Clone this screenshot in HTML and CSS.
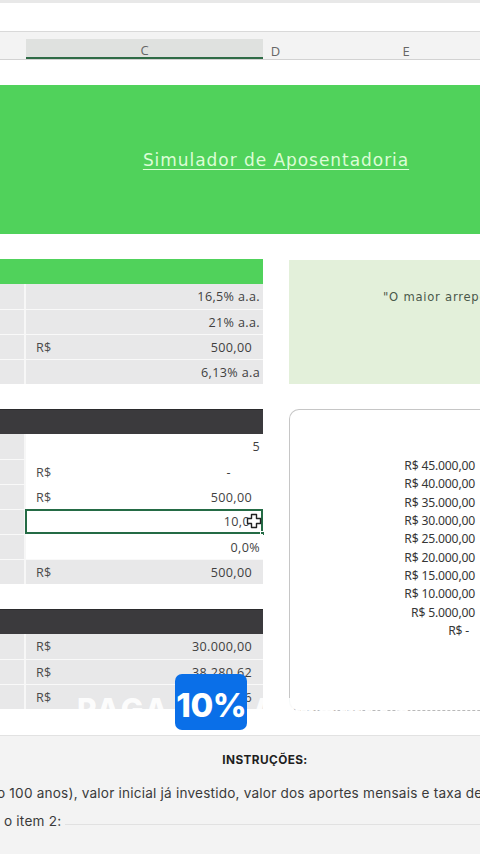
FILE: index.html
```html
<!DOCTYPE html>
<html lang="pt-BR">
<head>
<meta charset="utf-8">
<title>Simulador de Aposentadoria</title>
<link rel="stylesheet" href="styles.css">
</head>
<body>
<div class="page">
  <div class="top"></div>
  <div class="colheads">
    <div class="ch ch-b"></div>
    <div class="ch ch-c selected">C</div>
    <div class="ch ch-d">D</div>
    <div class="ch ch-e">E</div>
  </div>
  <div class="gap-row"></div>
  <div class="banner"><span class="title">Simulador de Aposentadoria</span></div>
  <div class="gap-row"></div>

  <div class="sheet">
    <div class="tbl">
      <div class="hdr hdr-green"></div>
      <div class="row"><div class="cb"></div><div class="cc"><span></span><span class="val pct">16,5% a.a.</span></div></div>
      <div class="row"><div class="cb"></div><div class="cc"><span></span><span class="val pct">21% a.a.</span></div></div>
      <div class="row"><div class="cb"></div><div class="cc"><span class="cur">R$</span><span class="val">500,00</span></div></div>
      <div class="row"><div class="cb"></div><div class="cc"><span></span><span class="val pct">6,13% a.a</span></div></div>
    </div>

    <div class="quote"><span>"O maior arrependimento</span></div>

    <div class="leftcol">
      <div class="tbl">
        <div class="hdr hdr-dark"></div>
        <div class="row"><div class="cb"></div><div class="cc white"><span></span><span class="val pct">5</span></div></div>
        <div class="row"><div class="cb"></div><div class="cc white"><span class="cur">R$</span><span class="val dash">-</span></div></div>
        <div class="row"><div class="cb"></div><div class="cc white"><span class="cur">R$</span><span class="val">500,00</span></div></div>
        <div class="row"><div class="cb"></div><div class="cc white sel"><span></span><span class="val">10,0</span>
          <svg class="cursor" width="16" height="16" viewBox="0 0 16 16"><path d="M5.5 1.5h5v4h4v5h-4v4h-5v-4h-4v-5h4z" fill="#fff" stroke="#222" stroke-width="1.4" stroke-linejoin="round"/></svg>
          <span class="handle"></span></div></div>
        <div class="row"><div class="cb"></div><div class="cc white"><span></span><span class="val pct">0,0%</span></div></div>
        <div class="row"><div class="cb"></div><div class="cc"><span class="cur">R$</span><span class="val">500,00</span></div></div>
      </div>
      <div class="tbl">
        <div class="hdr hdr-dark"></div>
        <div class="row"><div class="cb"></div><div class="cc"><span class="cur">R$</span><span class="val">30.000,00</span></div></div>
        <div class="row"><div class="cb"></div><div class="cc"><span class="cur">R$</span><span class="val">38.280,62</span></div></div>
        <div class="row"><div class="cb"></div><div class="cc"><span class="cur">R$</span><span class="val">41.563,36</span></div></div>
      </div>
    </div>

    <div class="chart">
      <div class="axis">
        <span>R$ 45.000,00</span>
        <span>R$ 40.000,00</span>
        <span>R$ 35.000,00</span>
        <span>R$ 30.000,00</span>
        <span>R$ 25.000,00</span>
        <span>R$ 20.000,00</span>
        <span>R$ 15.000,00</span>
        <span>R$ 10.000,00</span>
        <span>R$ 5.000,00</span>
        <span class="zero">R$ -</span>
      </div>
    </div>
  </div>

  <div class="instructions">
    <div class="ins-title">INSTRUÇÕES:</div>
    <div class="ins-line first">o 100 anos), valor inicial já investido, valor dos aportes mensais e taxa de</div>
    <div class="ins-line second"><span>o item 2:</span><span class="rule"></span></div>
  </div>

  <div class="promo">
    <span class="promo-word">PAGA</span>
    <span class="badge">10%</span>
    <span class="promo-word">A MENOS</span>
  </div>
</div>
</body>
</html>
```

FILE: styles.css
```css
* { box-sizing: border-box; }
html, body { margin: 0; padding: 0; }
body {
  background: #ffffff;
  width: 480px;
  height: 854px;
  overflow: hidden;
  font-family: "Open Sans", "Noto Sans", sans-serif;
  color: #3d3d3d;
}
.page { position: relative; width: 480px; height: 854px; overflow: hidden; }

.top {
  height: 31px;
  border-top: 3px solid #e8e8e8;
  background: #fff;
}

.colheads {
  display: flex;
  height: 29px;
  background: #f3f3f3;
  border-top: 1px solid #d9d9d9;
  border-bottom: 1px solid #d2d2d2;
  padding-top: 7px;
  white-space: nowrap;
}
.ch {
  height: 20px;
  display: flex;
  align-items: center;
  justify-content: center;
  font-size: 13px;
  color: #666;
  font-family: "Open Sans", sans-serif;
  flex: none;
  padding-top: 3px;
}
.ch-b { width: 26px; }
.ch-c { width: 237px; }
.ch-d { width: 25px; }
.ch-e { width: 236px; }
.selected {
  background: #dfe1df;
  border-bottom: 2px solid #2f6b46;
}

.gap-row { height: 25px; }

.banner {
  height: 149px;
  background: #50d25b;
  display: flex;
  align-items: center;
  justify-content: center;
  padding-left: 72px;
}
.title {
  font-family: "DejaVu Sans", Verdana, sans-serif;
  font-size: 17px;
  letter-spacing: 0.95px;
  color: #dcfdd6;
  text-decoration: underline;
  text-underline-offset: 3px;
  text-decoration-thickness: 1px;
  margin-top: 0;
}

.sheet {
  display: grid;
  grid-template-columns: 263px 1fr;
  column-gap: 26px;
  row-gap: 25px;
}

.tbl { display: flex; flex-direction: column; }
.hdr { height: 25px; }
.hdr-green { background: #50d25b; }
.hdr-dark { background: #3b3a3d; border-top: 1px solid #2b2b2d; }

.row {
  display: grid;
  grid-template-columns: 26px 1fr;
  height: 25px;
  font-size: 12.6px;
}
.row + .row .cb, .row + .row .cc { border-top: 1px solid #f9f9f9; }
.cb { background: #e8e8e9; border-right: 2px solid #f7f7f7; }
.cc {
  background: #e8e8e9;
  display: flex;
  align-items: center;
  justify-content: space-between;
  padding: 0 11px 0 10px;
  position: relative;
}
.cc.white { background: #ffffff; }
.row + .row .cc.white { border-top: 1px solid #ffffff; }
.cur { color: #4a4a4a; letter-spacing: 0.3px; }
.val { color: #3f3f3f; letter-spacing: 0.35px; }
.val.pct { margin-right: -8px; }
.val.dash { margin-right: 21px; }

.cc.sel {
  border: 2px solid #246b45 !important;
  margin-left: -1px;
}
.cursor { position: absolute; right: -1px; top: 2px; }
.handle {
  position: absolute;
  right: -4px;
  bottom: -4px;
  width: 5px;
  height: 5px;
  background: #246b45;
  border: 1px solid #fff;
}

.quote {
  margin-top: 1px;
  margin-right: -40px;
  background: #e3f0da;
  padding: 30px 0 0 94px;
  white-space: nowrap;
  overflow: hidden;
  font-family: "DejaVu Sans", Verdana, sans-serif;
  font-size: 11.6px;
  letter-spacing: 0.75px;
  color: #4a584a;
}

.leftcol { display: flex; flex-direction: column; gap: 25px; }

.chart {
  height: 302px;
  margin-right: -40px;
  border: 1px solid #c6c6c6;
  border-bottom: 1.5px dashed #b9b9b9;
  border-radius: 10px;
  background: #fff;
  padding: 47px 44px 0 0;
}
.axis {
  display: flex;
  flex-direction: column;
  align-items: flex-end;
  font-family: "Noto Sans", sans-serif;
  font-size: 12.2px;
  line-height: 18.35px;
  color: #363636;
  letter-spacing: -0.2px;
}
.axis .zero { margin-right: 6px; }

.instructions {
  margin-top: 24px;
  height: 140px;
  background: #f3f3f3;
  border-top: 1px solid #e2e2e2;
  font-family: "Inter", "Noto Sans", sans-serif;
  color: #3a3a3a;
}
.ins-title {
  text-align: center;
  padding: 17px 0 0 50px;
  font-weight: 700;
  font-size: 11.8px;
  letter-spacing: 0.4px;
  color: #1e1e1e;
  height: 43px;
}
.ins-line {
  white-space: nowrap;
  font-size: 13.6px;
  height: 28px;
  line-height: 28px;
  letter-spacing: 0.2px;
}
.ins-line.first { margin-left: -3px; }
.ins-line.second { display: flex; align-items: center; padding-left: 4px; gap: 4px; }
.ins-line .rule { flex: 1; height: 1px; background: #e1e1e1; margin-top: 6px; }

.promo {
  position: absolute;
  left: 77px;
  top: 674px;
  display: flex;
  align-items: center;
  gap: 5px;
  white-space: nowrap;
}
.promo-word {
  font-family: "Inter", "Open Sans", sans-serif;
  font-weight: 800;
  font-size: 30px;
  color: rgba(255,255,255,0.92);
  margin-top: 14px;
  letter-spacing: 2.5px;
}
.badge {
  width: 72px;
  height: 56px;
  background: #0a6fe8;
  border-radius: 7px;
  color: #fff;
  display: flex;
  align-items: center;
  justify-content: center;
  font-family: "Inter", "Open Sans", sans-serif;
  font-weight: 800;
  font-size: 33px;
  letter-spacing: -0.5px;
  padding-top: 6px;
}
```
